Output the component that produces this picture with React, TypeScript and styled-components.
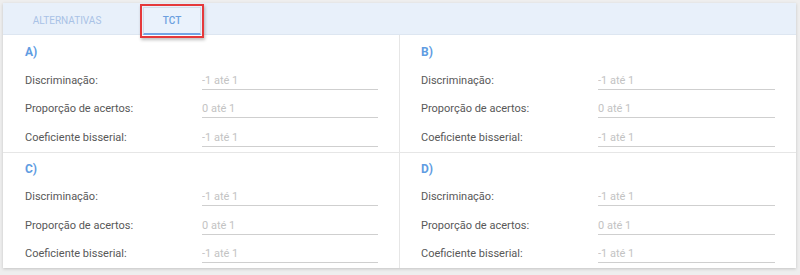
import * as React from "react";
import styled, { createGlobalStyle } from "styled-components";

const GlobalStyle = createGlobalStyle`
  html, body {
    margin: 0;
    padding: 0;
    background: #eeeeee;
    font-family: Roboto, "Liberation Sans", Arial, sans-serif;
  }
`;

const Page = styled.div`
  width: 800px;
  height: 275px;
  padding: 3px 4px 0 3px;
  box-sizing: border-box;
`;

const Panel = styled.div`
  background: #ffffff;
  box-shadow: 0 1px 3px rgba(0, 0, 0, 0.18);
`;

const TabBar = styled.div`
  position: relative;
  z-index: 1;
  display: flex;
  align-items: flex-start;
  height: 32px;
  background: #e8f0fa;
  border-bottom: 1px solid #dde6f1;
  box-sizing: border-box;
`;

const Tab = styled.div<{ $active?: boolean }>`
  display: flex;
  align-items: center;
  justify-content: center;
  height: 28px;
  box-sizing: border-box;
  font-size: 10px;
  font-weight: ${(p) => (p.$active ? 500 : 400)};
  text-transform: uppercase;
  color: ${(p) => (p.$active ? "#6c9fdf" : "#a8c2e6")};
  ${(p) =>
    p.$active
      ? `
    width: 58px;
    background: #eaf2fc;
    border: 1px solid #d3dde9;
    border-bottom: 2px solid #72a5e6;
  `
      : `
    width: 128px;
    margin-top: 3px;
  `}
`;

const Highlight = styled.div`
  margin: 1px 0 0 9px;
  padding: 1px;
  border: 2px solid #e5393b;
  box-shadow: 1px 2px 3px rgba(0, 0, 0, 0.25);
`;

const Grid = styled.div`
  display: grid;
  grid-template-columns: 396px 1fr;
`;

const Quadrant = styled.section<{ $right?: boolean; $bottom?: boolean }>`
  padding: ${(p) => (p.$bottom ? "7px" : "8px")} 21px 0
    ${(p) => (p.$right ? "21px" : "22px")};
  border-left: ${(p) => (p.$right ? "1px solid #e6e6e6" : "none")};
  border-top: ${(p) => (p.$bottom ? "1px solid #e6e6e6" : "none")};
`;

const Title = styled.h3`
  margin: 0 0 5px;
  height: 18px;
  line-height: 18px;
  font-size: 12px;
  font-weight: 700;
  color: #5f9ce2;
`;

const Row = styled.div`
  display: flex;
  align-items: center;
  height: 28.5px;
`;

const Label = styled.label`
  width: 177px;
  flex: none;
  font-size: 11px;
  color: #585858;
`;

const Field = styled.input`
  flex: 1;
  min-width: 0;
  height: 17px;
  margin-top: 1px;
  padding: 0;
  border: none;
  border-bottom: 1px solid #cfcfcf;
  background: transparent;
  font-family: inherit;
  font-size: 11px;
  color: #555555;
  outline: none;
  &::placeholder {
    color: #c3c3c3;
  }
`;

const fields = [
  { label: "Discriminação:", hint: "-1 até 1" },
  { label: "Proporção de acertos:", hint: "0 até 1" },
  { label: "Coeficiente bisserial:", hint: "-1 até 1" },
];

const letters = ["A", "B", "C", "D"];

const App: React.FC = () => {
  return (
    <Page>
      <GlobalStyle />
      <Panel>
        <TabBar>
          <Tab>Alternativas</Tab>
          <Highlight>
            <Tab $active>TCT</Tab>
          </Highlight>
        </TabBar>
        <Grid>
          {letters.map((letter, i) => (
            <Quadrant key={letter} $right={i % 2 === 1} $bottom={i > 1}>
              <Title>{letter})</Title>
              {fields.map((f) => (
                <Row key={f.label}>
                  <Label>{f.label}</Label>
                  <Field placeholder={f.hint} />
                </Row>
              ))}
            </Quadrant>
          ))}
        </Grid>
      </Panel>
    </Page>
  );
};

export default App;
